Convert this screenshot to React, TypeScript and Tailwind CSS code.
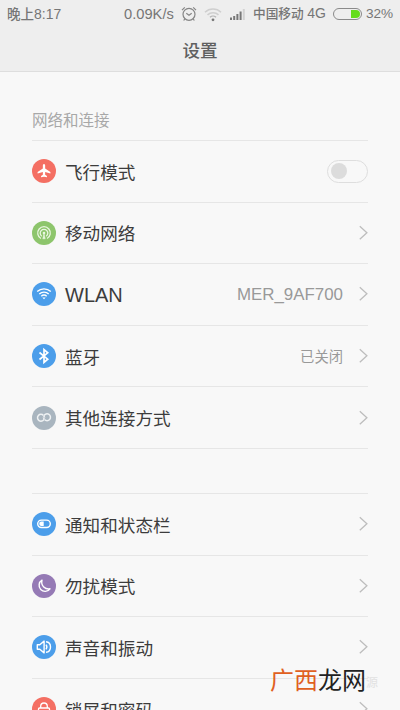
import React from "react";

interface IRow {
  label: string;
  color: string;
  icon: React.ReactNode;
  value?: string;
  latin?: boolean;
  toggle?: boolean;
}

const PlaneIcon = () => (
  <path
    d="M12 4.900c.8 0 1.150.8 1.150 1.600v3l5.250 3.500v1.500l-5.250-1.500v2.700l1.800 1.300v1.200L12 17.700l-2.950.5V17l1.800-1.300V13l-5.250 1.500V13l5.250-3.500v-3c0-.8.350-1.600 1.150-1.600z"
    fill="#fff"
  />
);

const CellularIcon = () => (
  <g fill="none" stroke="#e9f6e0" strokeWidth="1.3">
    <path d="M8.900 17.500a6.300 6.300 0 1 1 6.200 0" />
    <path d="M9.800 15.200a3.800 3.800 0 1 1 4.400 0" />
    <circle cx="12" cy="12" r="1.300" fill="#e9f6e0" stroke="none" />
    <path d="M10.800 17.800L12 12.500l1.200 5.300z" fill="#e9f6e0" strokeWidth=".5" />
  </g>
);

const WlanIcon = () => (
  <g fill="none" stroke="#fff" strokeWidth="1.4">
    <path d="M5.200 9.600a9.800 9.800 0 0 1 13.600 0" />
    <path d="M7.300 12a6.800 6.800 0 0 1 9.400 0" />
    <path d="M9.300 14.200a4 4 0 0 1 5.400 0" />
    <path d="M10.300 15.500h3.400L12 17.300z" fill="#fff" stroke="none" />
  </g>
);

const BluetoothIcon = () => (
  <path
    d="M7.500 8.500l8.200 6.700L12 18.400V5.600l3.700 3.200-8.200 6.700"
    fill="none"
    stroke="#fff"
    strokeWidth="1.7"
  />
);

const LinkIcon = () => (
  <g fill="none" stroke="#eef1f3" strokeWidth="1.500">
    <path d="M11.500 9.500A3.400 3.400 0 1 0 12 13.200" />
    <path d="M12.500 13.500A3.400 3.400 0 1 0 12 9.800" />
    <path d="M12 9.800q-1.200 1.500-.4 3.400M12 13.200q1.200-1.500.4-3.400" strokeWidth=".9" />
  </g>
);

const StatusIcon = () => (
  <g>
    <rect x="5.700" y="8.100" width="12.600" height="7.400" rx="3.700" fill="none" stroke="#fff" strokeWidth="1.400" />
    <path d="M11.700 9.600H9.400a2.200 2.200 0 0 0 0 4.400h2.300z" fill="#fff" />
  </g>
);

const MoonIcon = () => (
  <path
    d="M10 6.200a6 6 0 1 0 8 8.600c-4.500.8-9.500-3-8-8.600z"
    fill="none"
    stroke="#fff"
    strokeWidth="1.400"
    strokeLinejoin="round"
  />
);

const SoundIcon = () => (
  <g fill="none" stroke="#fff" strokeWidth="1.400" strokeLinejoin="round">
    <path d="M5.300 9.700h2.500l4.300-3.600v11.800l-4.300-3.600H5.300z" />
    <path d="M14 9.700q1.700 2.300 0 4.600" />
    <path d="M14 6.700c6 .6 6 10 0 10.600" />
  </g>
);

const LockIcon = () => (
  <g fill="none" stroke="#fff" strokeWidth="1.300">
    <path d="M8.700 11V9.300a3.300 3.300 0 0 1 6.600 0V11" />
    <rect x="6.500" y="11" width="11" height="6.500" rx="1" />
  </g>
);

const networkRows: IRow[] = [
  { label: "飞行模式", color: "bg-[#f46f63]", icon: <PlaneIcon />, toggle: true },
  { label: "移动网络", color: "bg-[#8dc56c]", icon: <CellularIcon /> },
  { label: "WLAN", color: "bg-[#4c9eea]", icon: <WlanIcon />, value: "MER_9AF700", latin: true },
  { label: "蓝牙", color: "bg-[#4c9eea]", icon: <BluetoothIcon />, value: "已关闭" },
  { label: "其他连接方式", color: "bg-[#a9b5bf]", icon: <LinkIcon /> },
];

const systemRows: IRow[] = [
  { label: "通知和状态栏", color: "bg-[#4c9eea]", icon: <StatusIcon /> },
  { label: "勿扰模式", color: "bg-[#957ab5]", icon: <MoonIcon /> },
  { label: "声音和振动", color: "bg-[#4c9eea]", icon: <SoundIcon /> },
  { label: "锁屏和密码", color: "bg-[#f46f63]", icon: <LockIcon /> },
];

const Chevron = () => (
  <svg width="10" height="16" viewBox="0 0 10 16" className="shrink-0">
    <path d="M1.800 1.300L8.900 7.700l-7.100 6.600" fill="none" stroke="#bdbdbd" strokeWidth="1.300" />
  </svg>
);

const Row: React.FC<{ row: IRow }> = ({ row }) => (
  <div className="flex h-[61.6px] shrink-0 items-center border-b border-[#e6e6e6]">
    <span className={`flex size-6 shrink-0 rounded-full ${row.color}`}>
      <svg width="24" height="24" viewBox="0 0 24 24">
        {row.icon}
      </svg>
    </span>
    <span
      className={`ml-[9px] flex-1 whitespace-nowrap text-[#3c3c3c] ${
        row.latin ? "pt-px text-[20px] leading-6" : "pt-[3px] text-[17.6px] leading-6"
      }`}
    >
      {row.label}
    </span>
    {row.value && (
      <span
        className={`mr-[15px] text-[#999] ${
          row.latin ? "pt-px text-[16.9px]" : "pt-[3px] text-[14.3px]"
        }`}
      >
        {row.value}
      </span>
    )}
    {row.toggle ? (
      <span className="flex h-[23px] w-[41px] items-center rounded-full border border-[#dedede] pl-[3px]">
        <span className="size-4 rounded-full bg-[#dcdcdc]" />
      </span>
    ) : (
      <Chevron />
    )}
  </div>
);

const StatusBar = () => (
  <div className="flex h-7 items-center pl-[7px] text-[#767676]">
    <span className="w-[117px] whitespace-nowrap pt-px text-[13.500px] font-medium">
      晚上<span className="text-[14px] font-normal">8:17</span>
    </span>
    <span className="w-[57px] pt-px text-[14.700px]">0.09K/s</span>
    <svg width="16" height="16" viewBox="0 0 16 16" fill="none" stroke="#858585" strokeWidth="1.200">
      <circle cx="8" cy="8.300" r="6" />
      <path d="M5.300 7.300L8 9.200l2.700-1.900M1 4.200l2.800-2.800M15 4.200l-2.800-2.800M3.700 13l-1 1.500M12.300 13l1 1.500" />
    </svg>
    <svg width="18" height="15" viewBox="0 0 18 15" fill="none" className="ml-[7px]">
      <g stroke="#cfcfcf" strokeWidth="1.500">
        <path d="M1 5.200a11.400 11.400 0 0 1 16 0" />
        <path d="M3.500 7.900a7.800 7.800 0 0 1 11 0" />
      </g>
      <path d="M6 10.300a4.300 4.300 0 0 1 6 0" stroke="#b5b5b5" strokeWidth="1.300" />
      <circle cx="9" cy="12.800" r="1.400" fill="#777" />
    </svg>
    <svg width="16" height="14" viewBox="0 0 16 14" className="ml-[8px]">
      <path d="M0 10.500h2V13H0zM3.200 9h2v4h-2zM6.400 7h2v6h-2zM9.600 4.500h2V13h-2z" fill="#777" />
      <path d="M12.800 2h2v11h-2z" fill="#d2d2d2" />
    </svg>
    <span className="ml-[7px] w-[80px] whitespace-nowrap text-[12.700px] font-medium">
      中国移动 <span className="text-[14px] font-normal">4G</span>
    </span>
    <span className="flex h-3 w-[29px] shrink-0 items-center justify-end rounded-full border border-[#8a8a8a] pr-px">
      <span className="h-2 w-[9px] rounded-r-full bg-[#66dc1c]" />
    </span>
    <span className="ml-[4px] pt-px text-[13.600px]">32%</span>
  </div>
);

const Watermark = () => (
  <div className="absolute top-[663px] left-[270px] flex h-9 items-center whitespace-nowrap">
    <span className="text-[24px] leading-9 text-[#e0601f]">广西</span>
    <span className="text-[24px] leading-9 text-[#222]">龙网</span>
    <span className="pt-1 text-[12px] text-[#e2e2e2]">源</span>
  </div>
);

export default function App() {
  return (
    <div className="relative flex h-[710px] w-[400px] flex-col overflow-hidden bg-[#f8f8f8] font-['Liberation_Sans','Noto_Sans_CJK_SC',sans-serif]">
      <header className="h-[72px] shrink-0 border-b border-[#dedede] bg-[#eeeeee]">
        <StatusBar />
        <h1 className="pt-[9px] text-center text-[17.600px] leading-7 font-medium text-[#606060]">
          设置
        </h1>
      </header>
      <main className="flex flex-col px-8">
        <h2 className="flex h-[69px] shrink-0 items-end border-b border-[#e6e6e6] pb-[7px] text-[15.500px] leading-6 text-[#a8a8a8]">
          网络和连接
        </h2>
        {networkRows.map((row) => (
          <Row key={row.label} row={row} />
        ))}
        <div className="h-[45px] shrink-0 border-b border-[#e6e6e6]" />
        {systemRows.map((row) => (
          <Row key={row.label} row={row} />
        ))}
      </main>
      <Watermark />
    </div>
  );
}
